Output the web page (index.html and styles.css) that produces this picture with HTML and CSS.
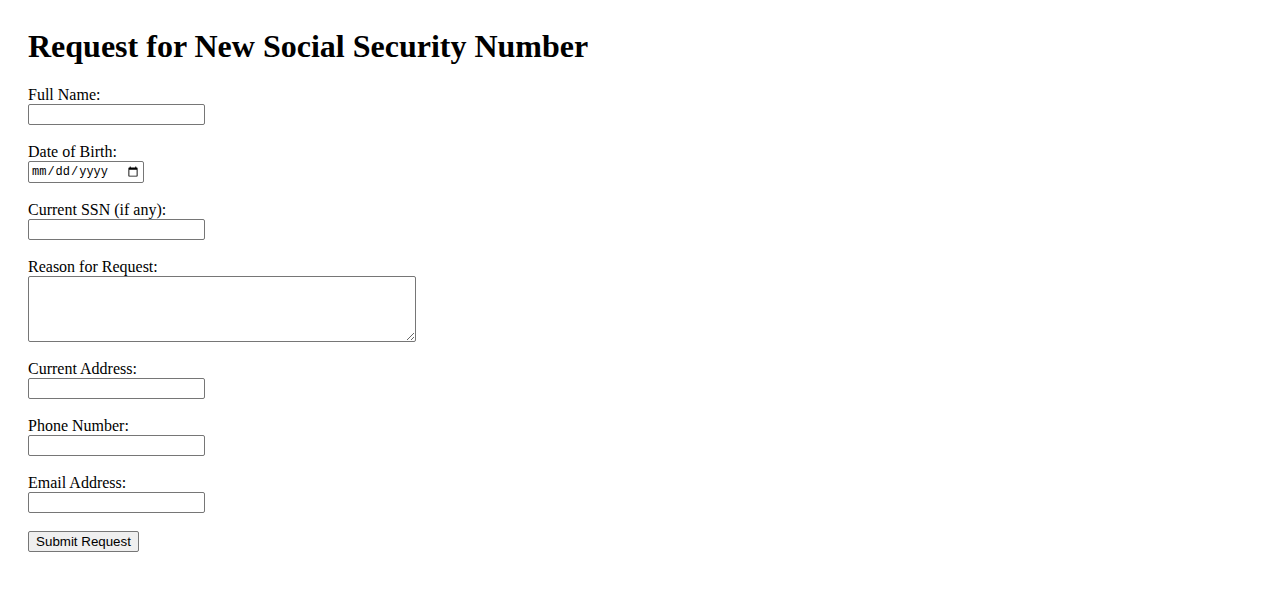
FILE: index.html
```html
<!DOCTYPE html>
<html lang="en">
<head>
<meta charset="utf-8">
<title>Request for New Social Security Number</title>
<link rel="stylesheet" href="styles.css">
</head>
<body>
<h1 class="title">Request for New Social Security Number</h1>
<form class="form">
  <div class="field">
    <label class="label" for="name">Full Name:</label>
    <input class="input" id="name" type="text">
  </div>
  <div class="field">
    <label class="label" for="dob">Date of Birth:</label>
    <input class="input date" id="dob" type="date">
  </div>
  <div class="field">
    <label class="label" for="ssn">Current SSN (if any):</label>
    <input class="input" id="ssn" type="text">
  </div>
  <div class="field">
    <label class="label" for="reason">Reason for Request:</label>
    <textarea class="textarea" id="reason"></textarea>
  </div>
  <div class="field">
    <label class="label" for="addr">Current Address:</label>
    <input class="input" id="addr" type="text">
  </div>
  <div class="field">
    <label class="label" for="phone">Phone Number:</label>
    <input class="input" id="phone" type="text">
  </div>
  <div class="field">
    <label class="label" for="email">Email Address:</label>
    <input class="input" id="email" type="text">
  </div>
  <button class="submit" type="submit">Submit Request</button>
</form>
</body>
</html>
```

FILE: styles.css
```css
html, body {
  background: #ffffff;
}
body {
  margin: 0;
  padding: 28px;
  font-family: "Liberation Serif", "Times New Roman", serif;
  font-size: 16px;
  color: #000000;
}
.title {
  margin: 0 0 21px 0;
  font-size: 32px;
  line-height: 37px;
  font-weight: bold;
}
.form {
  display: flex;
  flex-direction: column;
  align-items: flex-start;
}
.field {
  display: flex;
  flex-direction: column;
  align-items: flex-start;
  margin-bottom: 18px;
}
.label {
  display: block;
  line-height: 18px;
  height: 18px;
}
.input, .textarea {
  box-sizing: border-box;
  margin: 0;
  border: 1px solid #767676;
  border-radius: 2px;
  background: #ffffff;
  padding: 1px 2px;
  font-family: "Liberation Sans", Arial, sans-serif;
  font-size: 13.33px;
}
.input {
  width: 177px;
  height: 21px;
}
.date {
  width: 116px;
  height: 22px;
  font-family: "Liberation Mono", "DejaVu Sans Mono", monospace;
  font-size: 12px;
  color: #000;
}
.textarea {
  width: 388px;
  height: 66px;
  resize: both;
}
.submit {
  box-sizing: border-box;
  margin: 0;
  width: 111px;
  height: 21px;
  padding: 1px 6px;
  border: 1px solid #767676;
  border-radius: 2px;
  background: #efefef;
  font-family: "Liberation Sans", Arial, sans-serif;
  font-size: 13.33px;
  color: #000;
}
```
